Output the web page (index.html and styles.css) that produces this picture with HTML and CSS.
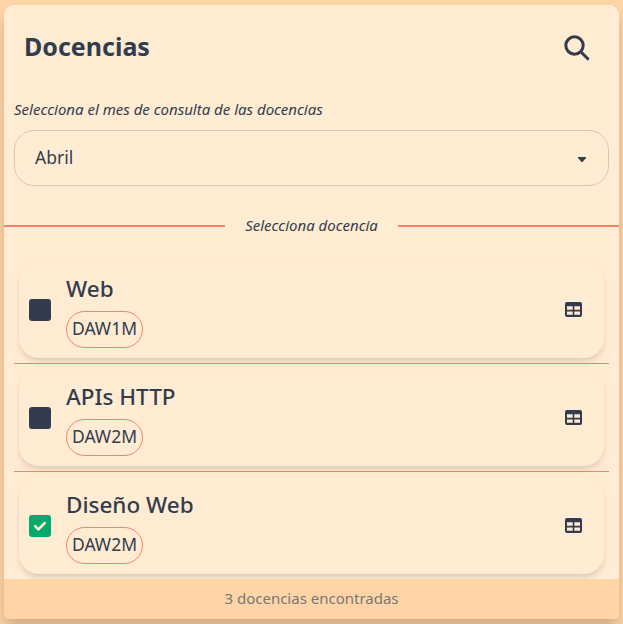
FILE: index.html
```html
<!DOCTYPE html>
<html lang="es">
<head>
<meta charset="utf-8">
<title>Docencias</title>
<link rel="stylesheet" href="styles.css">
</head>
<body>
<svg width="0" height="0" class="sprite">
  <symbol id="table" viewBox="0 0 17 15">
    <path fill-rule="evenodd" d="M2 0h13a2 2 0 0 1 2 2v11a2 2 0 0 1-2 2H2a2 2 0 0 1-2-2V2a2 2 0 0 1 2-2zM2 4.200v3.600h5.700V4.200zM9.300 4.200v3.600h5.700V4.200zM2 9.500v3.300h5.700V9.500zM9.300 9.500v3.300h5.700V9.500z"/>
  </symbol>
</svg>
<main class="panel">
  <header class="header">
    <h1 class="title">Docencias</h1>
    <svg class="search" viewBox="0 0 26 26"><circle cx="10.500" cy="10.500" r="8.700"/><path d="M17 17l6.800 6.800"/></svg>
  </header>
  <div class="field">
    <label class="label">Selecciona el mes de consulta de las docencias</label>
    <div class="select"><span>Abril</span><svg class="arrow" viewBox="0 0 8 5"><path d="M0 0h8v1L4.500 5h-1L0 1z"/></svg></div>
  </div>
  <div class="divider"><span>Selecciona docencia</span></div>
  <ul class="list">
    <li class="item"><div class="card">
      <span class="check"></span>
      <div class="info"><h2 class="name">Web</h2><span class="badge">DAW1M</span></div>
      <svg class="table"><use href="#table"/></svg>
    </div></li>
    <li class="item"><div class="card">
      <span class="check"></span>
      <div class="info"><h2 class="name">APIs HTTP</h2><span class="badge">DAW2M</span></div>
      <svg class="table"><use href="#table"/></svg>
    </div></li>
    <li class="item"><div class="card">
      <span class="check checked"><svg viewBox="0 0 22 22"><path d="M6.200 11.200l3 3.300L15.800 8"/></svg></span>
      <div class="info"><h2 class="name">Diseño Web</h2><span class="badge">DAW2M</span></div>
      <svg class="table"><use href="#table"/></svg>
    </div></li>
  </ul>
  <footer class="footer">3 docencias encontradas</footer>
</main>
</body>
</html>
```
FILE: styles.css
```css
* { box-sizing: border-box; }
body {
  margin: 0;
  padding: 5px 4px;
  height: 624px;
  overflow: hidden;
  background: #ffd5a7;
  color: #333c4e;
  font-family: "Noto Sans", sans-serif;
}
.sprite { position: absolute; }
.panel {
  height: 614px;
  background: #ffecd2;
  border-radius: 10px 10px 5px 5px;
  box-shadow: 0 10px 15px -1px rgba(0, 0, 0, 0.2);
  overflow: hidden;
}
.header {
  display: flex;
  align-items: center;
  justify-content: space-between;
  height: 84px;
  padding: 0 29px 0 20px;
}
.title { margin: 0 0 2px; font-size: 25px; line-height: 34px; font-weight: 700; }
.search {
  width: 26px;
  height: 26px;
  margin-top: 1px;
  fill: none;
  stroke: #333c4e;
  stroke-width: 3;
  stroke-linecap: round;
}
.field { padding: 9px 10px 0; }
.label { display: block; font-size: 15px; line-height: 22px; font-style: italic; }
.select {
  display: flex;
  align-items: center;
  justify-content: space-between;
  height: 56px;
  margin-top: 10px;
  padding: 0 22px 2px 20px;
  border: 1px solid #d7c9b7;
  border-radius: 20px;
  font-size: 17.500px;
}
.arrow { width: 8px; height: 5px; margin-top: 4px; fill: #333c4e; }
.divider {
  display: flex;
  align-items: center;
  gap: 20px;
  height: 22px;
  margin-top: 29px;
  font-size: 15px;
  font-style: italic;
}
.divider span { padding-bottom: 2px; }
.divider::before, .divider::after { content: ""; flex: 1; height: 2px; background: #fb8069; }
.list { list-style: none; margin: 19px 10px 0; padding: 0; }
.item { height: 108px; padding: 5px; border-bottom: 1px solid #fb8069; }
.item:last-child { height: 107px; border: 0; }
.card {
  display: flex;
  align-items: center;
  height: 97px;
  padding: 0 22px 0 10px;
  border-radius: 20px;
  background: #ffecd2;
  box-shadow: 0 4px 6px -1px rgba(0, 0, 0, 0.15);
}
.check { width: 22px; height: 22px; border-radius: 3px; background: #333c4e; }
.checked { background: #04aa6d; }
.check svg {
  display: block;
  fill: none;
  stroke: #ffecd2;
  stroke-width: 2.500;
  stroke-linecap: round;
  stroke-linejoin: round;
}
.info { flex: 1; margin-left: 15px; }
.name { margin: 1px 0 6px; font-size: 22.500px; line-height: 32px; font-weight: 500; }
.badge {
  display: block;
  width: 77px;
  height: 37px;
  border: 1px solid #fb8069;
  border-radius: 20px;
  font-size: 17.500px;
  line-height: 33px;
  text-align: center;
}
.table { width: 17px; height: 15px; fill: #333c4e; }
.footer {
  height: 40px;
  background: #ffd5a7;
  color: #777;
  font-size: 15px;
  line-height: 38px;
  text-align: center;
}
```
